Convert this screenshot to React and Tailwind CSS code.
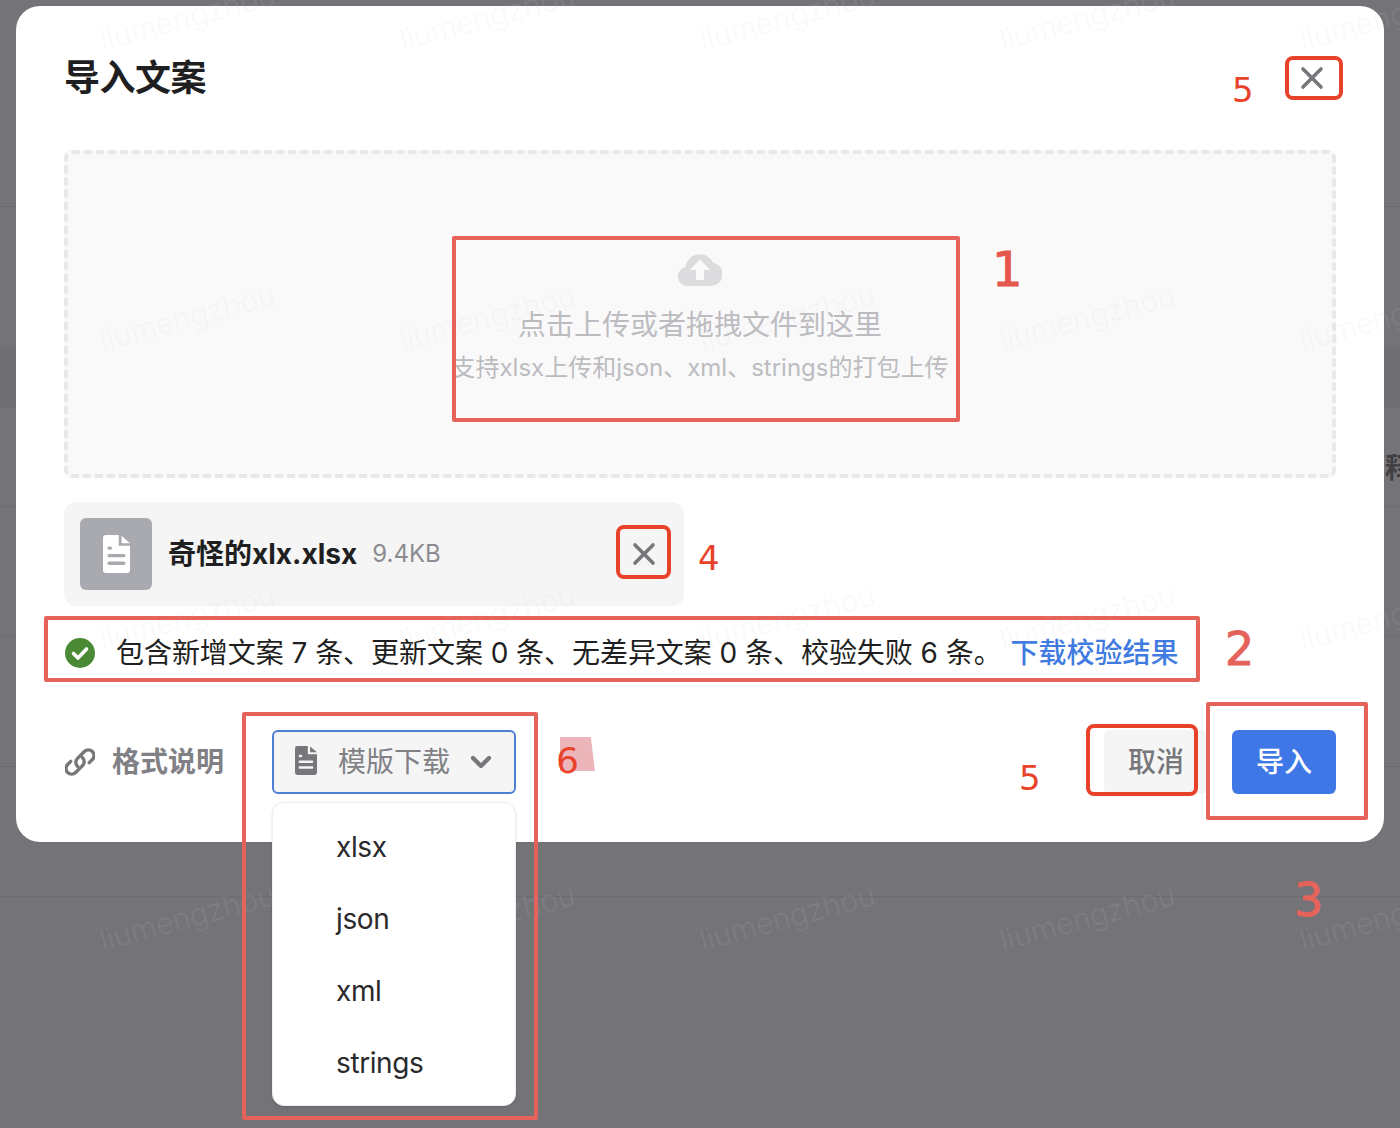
import React from "react";
import { X, ChevronDown } from "lucide-react";

const Box = ({ className }) => <div className={"absolute border-4 " + className} />;
const Num = ({ className, children }) => <span className={"absolute leading-none " + className}>{children}</span>;

const FileGlyph = ({ className }) => (
  <svg viewBox="0 0 24 30" preserveAspectRatio="none" className={className}>
    <path d="M2.5 0H14v8.5h10V27.5A2.5 2.5 0 0 1 21.5 30h-19A2.5 2.5 0 0 1 0 27.5V2.5A2.5 2.5 0 0 1 2.5 0Z" fill="currentColor" />
    <path d="M16.5 0.5 24 6.5h-7.5Z" fill="currentColor" />
    <rect x="4" y="9" width="4" height="2.6" rx="1.3" fill="var(--hole)" />
    <rect x="4" y="15" width="16" height="2.6" rx="1.3" fill="var(--hole)" />
    <rect x="4" y="21" width="16" height="2.6" rx="1.3" fill="var(--hole)" />
  </svg>
);

export default function App() {
  const marks = Array.from({ length: 25 });
  return (
    <div className="relative h-[1128px] w-full overflow-hidden bg-[#737378] font-[Inter,'Noto_Sans_CJK_SC',sans-serif]">
      {/* page behind the dialog */}
      <div className="absolute inset-0 flex flex-col">
        <div className="h-[207px] border-b border-[#6b6b70]" />
        <div className="h-[138px]" />
        <div className="h-[62px] border-b border-[#6b6b70] bg-[#6f6f74]" />
        <div className="h-[100px] border-b border-[#6b6b70]" />
        <div className="h-[130px] border-b border-[#6b6b70]" />
        <div className="h-[130px] border-b border-[#6b6b70]" />
        <div className="h-[130px] border-b border-[#6b6b70]" />
      </div>
      <span className="absolute left-[1385px] top-[454px] text-[28px] font-bold leading-[28px] text-[#3f3f44]">释</span>

      {/* dialog */}
      <div className="relative mx-4 mt-[6px] h-[836px] rounded-[24px] bg-white px-12">
        <div className="flex h-[144px] items-center justify-between">
          <h1 className="text-[36px] font-bold leading-none tracking-[-0.5px] text-[#1f1f22]">导入文案</h1>
          <X className="mr-[6px] h-9 w-9 text-[#77777b]" strokeWidth={2.4} />
        </div>

        <div className="flex h-[328px] flex-col items-center rounded-lg border-4 border-dashed border-[#e8e8ea] bg-[#f9f9fa] pt-[96px]">
          <svg viewBox="0 0 44 36" className="h-9 w-11">
            <path d="M9.5 36A9.5 9.5 0 0 1 7.4 17.2 14.5 14.5 0 0 1 35 12.6 11.8 11.8 0 0 1 33 36Z" fill="#dcdcde" />
            <path d="M22 9 32 20h-6v10h-8V20h-6Z" fill="#f9f9fa" />
          </svg>
          <p className="mt-[17px] text-[28px] leading-[44px] text-[#bcbcc0]">点击上传或者拖拽文件到这里</p>
          <p className="mt-[3px] text-[24px] leading-[36px] text-[#bcbcc0]">支持xlsx上传和json、xml、strings的打包上传</p>
        </div>

        <div className="mt-6 flex h-[104px] w-[620px] items-center rounded-xl bg-[#f5f5f6] pl-4 pr-[22px]">
          <div className="flex h-[72px] w-[72px] items-center justify-center rounded-md bg-[#a9aab0] text-white [--hole:#a9aab0]">
            <FileGlyph className="h-[38px] w-[27px]" />
          </div>
          <span className="ml-4 text-[28px] font-bold leading-none text-[#1f1f22]">奇怪的xlx.xlsx</span>
          <span className="ml-[15px] text-[24px] leading-none text-[#8c8c90]">9.4KB</span>
          <X className="ml-auto h-9 w-9 text-[#77777b]" strokeWidth={2.4} />
        </div>

        <div className="mt-6 flex h-[46px] items-center">
          <svg viewBox="0 0 30 30" className="ml-px h-[30px] w-[30px]">
            <circle cx="15" cy="15" r="15" fill="#4a8a35" />
            <path d="M8.5 15.5 13 20l8.5-9" fill="none" stroke="#fff" strokeWidth="3.6" strokeLinecap="round" strokeLinejoin="round" />
          </svg>
          <span className="ml-[21px] text-[28px] leading-none tracking-[-0.05px] text-[#1f1f22]">包含新增文案 7 条、更新文案 0 条、无差异文案 0 条、校验失败 6 条。</span>
          <span className="ml-[9px] text-[28px] font-medium leading-none text-[#3f7be0]">下载校验结果</span>
        </div>

        <div className="mt-[54px] flex h-16 items-center">
          <svg viewBox="3 3 24 24" className="ml-px h-[30px] w-[30px] text-[#77777b]" fill="none" stroke="currentColor" strokeWidth="2.7" strokeLinecap="round">
            <path d="M13 18.5a4.5 4.5 0 0 1 0-6.4l5.5-5.5a4.5 4.5 0 0 1 6.4 6.4l-2.5 2.5" />
            <path d="M17 11.5a4.5 4.5 0 0 1 0 6.4l-5.5 5.5a4.5 4.5 0 0 1-6.4-6.4l2.5-2.5" />
          </svg>
          <span className="ml-[17px] text-[28px] font-bold leading-none text-[#808085]">格式说明</span>
          <div className="relative ml-12 w-[244px]">
            <div className="flex h-16 items-center rounded-md border-2 border-[#4f7fd4] bg-[#f5f5f6] pl-[21px] text-[#77777b] [--hole:#f5f5f6]">
              <FileGlyph className="mb-[3px] h-[29px] w-[22px]" />
              <span className="ml-[21px] text-[28px] leading-none text-[#808085]">模版下载</span>
              <ChevronDown className="ml-[15px] h-8 w-8" strokeWidth={3.2} />
            </div>
            <ul className="absolute left-0 top-[72px] z-20 w-[244px] rounded-xl border border-[#efeff1] bg-white pb-[6px] pt-2 shadow-sm">
              {["xlsx", "json", "xml", "strings"].map((t) => (
                <li key={t} className="flex h-[72px] items-center pl-[63px] text-[28px] leading-none tracking-[-0.4px] text-[#2a2a2d]">{t}</li>
              ))}
            </ul>
          </div>
          <button className="ml-auto flex h-16 w-[104px] items-center justify-center rounded-md bg-[#f5f5f6] text-[28px] font-medium leading-none text-[#77777b]">取消</button>
          <button className="ml-6 flex h-16 w-[104px] items-center justify-center rounded-md bg-[#3f78e6] text-[28px] font-medium leading-none text-white">导入</button>
        </div>
      </div>

      {/* watermark */}
      <div className="pointer-events-none absolute left-[37px] top-[-133px] z-10 grid grid-cols-[repeat(5,300px)] auto-rows-[300px]">
        {marks.map((_, i) => (
          <div key={i} className="flex items-center justify-center">
            <span className="-rotate-[15deg] text-[30px] font-light leading-none text-[#d0d0d4]/12">liumengzhou</span>
          </div>
        ))}
      </div>

      {/* review annotations */}
      <div className="pointer-events-none absolute inset-0 z-30 font-['DejaVu_Sans',sans-serif]">
        <Box className="left-[452px] top-[236px] h-[186px] w-[508px] rounded-[2px] border-[#e5635b]" />
        <Box className="left-[1285px] top-[56px] h-[44px] w-[58px] rounded-lg border-[#e8432a]" />
        <Box className="left-[616px] top-[525px] h-[54px] w-[55px] rounded-lg border-[#e8432a]" />
        <Box className="left-[44px] top-[616px] h-[66px] w-[1156px] rounded-[2px] border-[#e5635b]" />
        <Box className="left-[242px] top-[712px] h-[408px] w-[296px] rounded-[2px] border-[#e5635b]" />
        <Box className="left-[1086px] top-[724px] h-[72px] w-[112px] rounded-lg border-[#e8432a]" />
        <Box className="left-[1206px] top-[702px] h-[118px] w-[162px] rounded-[2px] border-[#e5635b]" />
        <div className="absolute left-[560px] top-[737px] h-[34px] w-[35px] bg-[#ebb5b9] [clip-path:polygon(0_0,88%_0,100%_100%,0_100%)]" />
        <Num className="left-[992px] top-[245px] text-[48px] text-[#e5564d] [-webkit-text-stroke:1px_#e5564d]">1</Num>
        <Num className="left-[1225px] top-[626px] text-[46px] text-[#e5635b] [-webkit-text-stroke:1px_#e5635b]">2</Num>
        <Num className="left-[1294px] top-[877px] text-[46px] text-[#e5635b] [-webkit-text-stroke:1px_#e5635b]">3</Num>
        <Num className="left-[698px] top-[541px] text-[34px] text-[#e8432a]">4</Num>
        <Num className="left-[1232px] top-[73px] text-[34px] text-[#e8432a]">5</Num>
        <Num className="left-[1019px] top-[761px] text-[34px] text-[#e8432a]">5</Num>
        <Num className="left-[556px] top-[743px] text-[36px] text-[#e8432a]">6</Num>
      </div>
    </div>
  );
}
